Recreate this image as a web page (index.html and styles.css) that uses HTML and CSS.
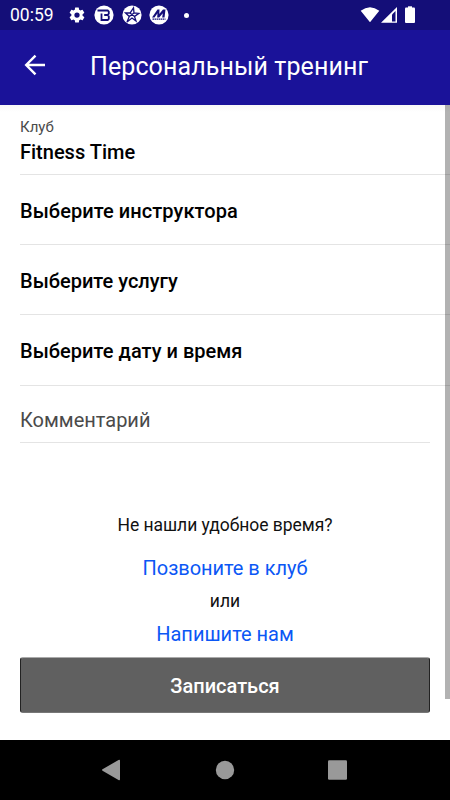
FILE: index.html
```html
<!DOCTYPE html>
<html lang="ru">
<head>
<meta charset="utf-8">
<title>Персональный тренинг</title>
<link rel="stylesheet" href="styles.css">
</head>
<body>
<div class="screen">
  <div class="status">
    <span class="clock">00:59</span>
    <svg class="gear" width="18" height="18" viewBox="0 0 24 24"><path fill="#fff" fill-rule="evenodd" d="M19.4 13a7.500 7.500 0 0 0 0-2l2.100-1.600a.5.5 0 0 0 .1-.7l-2-3.400a.5.5 0 0 0-.6-.2l-2.500 1a7.300 7.300 0 0 0-1.700-1L14.400 2.400a.5.5 0 0 0-.5-.4h-4a.5.5 0 0 0-.5.400L9.100 5.100a7.700 7.700 0 0 0-1.700 1l-2.500-1a.5.5 0 0 0-.6.2l-2 3.400a.5.5 0 0 0 .1.700L4.500 11a8 8 0 0 0 0 2l-2.100 1.600a.5.5 0 0 0-.1.700l2 3.400c.1.200.4.300.6.200l2.500-1c.5.400 1.100.7 1.700 1l.4 2.700c0 .2.200.4.500.4h4c.2 0 .5-.2.500-.4l.4-2.700a7.300 7.300 0 0 0 1.700-1l2.500 1c.2.100.5 0 .6-.2l2-3.400a.5.5 0 0 0-.1-.7zM12 15.500a3.500 3.500 0 1 1 0-7 3.500 3.500 0 0 1 0 7z"/></svg>
    <svg class="app" width="20" height="20" viewBox="0 0 20 20"><circle cx="10" cy="10" r="9.600" fill="#fff"/><path fill="none" stroke="#140e78" stroke-width="1.800" d="M3.500 5.500H13.700L14.800 6.700V8.700L13.700 10 14.800 11.300V13.800L13.700 15H7.500V8.500M10.200 10H13.500"/></svg>
    <svg class="app" width="20" height="20" viewBox="0 0 20 20"><circle cx="10" cy="10" r="9.600" fill="#fff"/><path fill="none" stroke="#140e78" stroke-width="1.300" d="M11.500 2.800L12 8l4.800.4-4.300 3 1.500 4.600-4-3-5 4 2.300-5.500L3.500 8H8zM8 8l4.500 3.400M7.300 11.500L12 8"/></svg>
    <svg class="app" width="20" height="20" viewBox="0 0 20 20"><circle cx="10" cy="10" r="9.600" fill="#fff"/><path fill="#140e78" d="M3 12.500L8.500 4.500h2L10.300 9l3.700-4.500H16.500L15.500 12.500h-2.300l.6-4.300-3.600 4.300H8.200l.3-4.300L5.500 12.500z"/><path stroke="#140e78" stroke-width="1.300" stroke-dasharray="1.500 .5" d="M3.500 14.200h13"/></svg>
    <i class="dot"></i>
    <svg class="signals" width="60" height="20" viewBox="0 0 60 20"><path fill="#fff" d="M.7 5.800Q10 -1.500 19.300 5.800L10 17.300zM21 17.800L37 2v15.800z"/><path fill="#140e78" d="M32 9.500L35.500 6v10.500H32z"/><rect x="45" y="2.500" width="10" height="15.500" rx="1" fill="#fff"/><path fill="#fff" d="M48 1.300h4v2h-4z"/></svg>
  </div>
  <header class="bar">
    <svg class="back" width="22" height="22" viewBox="0 0 22 22"><path fill="none" stroke="#fff" stroke-width="2.400" d="M21 11H2.500M11.500 1.700L2.200 11l9.300 9.300"/></svg>
    <h1>Персональный тренинг</h1>
  </header>
  <main>
    <div class="row club"><small>Клуб</small><b>Fitness Time</b></div>
    <div class="row"><b class="wide">Выберите инструктора</b></div>
    <div class="row"><b>Выберите услугу</b></div>
    <div class="row date"><b>Выберите дату и время</b></div>
    <div class="comment"><span>Комментарий</span></div>
    <div class="help">
      <p class="q"><span>Не нашли удобное время?</span></p>
      <p class="link call"><span>Позвоните в клуб</span></p>
      <p class="or"><span>или</span></p>
      <p class="link mail"><span>Напишите нам</span></p>
    </div>
    <div class="submit"><span>Записаться</span></div>
    <i class="thumb"></i>
  </main>
  <nav>
    <svg width="450" height="60" viewBox="0 0 450 60"><g fill="#999"><path d="M102.500 29.300L118.500 20q1.500-.7 1.500.8v18.500q0 1.400-1.500.7L102.500 30.700q-1-.7 0-1.400z"/><circle cx="225" cy="30" r="9.200"/><rect x="328" y="20.300" width="19" height="19.400" rx="1.200"/></g></svg>
  </nav>
</div>
</body>
</html>
```
FILE: styles.css
```css
* { box-sizing: border-box; margin: 0; padding: 0; }
body { width: 450px; height: 800px; overflow: hidden; font-family: Roboto, sans-serif; background: #fff; color: #000; }
.screen { display: flex; flex-direction: column; height: 800px; }
svg, i { display: block; flex: none; }
.status { height: 30px; background: #140e78; display: flex; align-items: center; padding: 0 30px 0 10px; color: #fff; }
.clock { font-size: 17.500px; line-height: 30px; width: 58px; white-space: nowrap; }
.gear { margin-right: 8px; }
.app { margin-right: 7.500px; }
.dot { width: 5px; height: 5px; border-radius: 50%; background: #fff; margin-left: 7px; }
.signals { margin-left: auto; }
.bar { height: 75px; background: #1a1299; display: flex; align-items: center; padding: 0 0 5px 24px; color: #fff; }
.back { margin-right: 44px; }
h1 { font-size: 25px; font-weight: 400; letter-spacing: .1px; line-height: 30px; white-space: nowrap; padding-top: 4px; }
main { position: relative; height: 635px; display: flex; flex-direction: column; background: linear-gradient(#f7f7f7, #fff 7px); }
.row { height: 70px; margin-left: 20px; border-bottom: 1px solid #e4e4e4; display: flex; align-items: center; padding-top: 3px; }
.club { flex-direction: column; align-items: flex-start; padding-top: 14px; }
.date { height: 71px; padding-bottom: 1px; }
small { font-size: 15px; font-weight: 400; line-height: 17px; color: #4a4a4a; }
b { font-size: 20px; font-weight: 500; line-height: 24px; white-space: nowrap; }
.wide { letter-spacing: .07px; }
.date b { letter-spacing: .03px; }
.club b { margin-top: 4px; }
.comment { height: 57px; margin: 0 20px; border-bottom: 1px solid #e4e4e4; font-size: 20px; font-weight: 400; line-height: 24px; padding-top: 22px; color: #4a4a4a; }
.help { text-align: center; padding-top: 70px; height: 214px; }
.q, .or { font-size: 17.500px; line-height: 24px; color: #111; }
.q { letter-spacing: -.04px; }
.link { font-size: 20px; line-height: 24px; color: #0b57f5; }
.call { margin-top: 19px; letter-spacing: -.04px; }
.or { margin-top: 9px; }
.mail { margin-top: 9px; }
.submit { height: 56px; margin: 0 20px; border: 1px solid #222; border-top-color: #aaa; border-bottom-color: #777; border-radius: 3px; background: #606060; color: #fff; display: flex; align-items: center; justify-content: center; font-size: 20px; font-weight: 500; line-height: 24px; padding-top: 1px; }
.thumb { position: absolute; right: 0; top: 0; width: 5px; height: 594px; background: rgba(0, 0, 0, .3); }
nav { height: 60px; background: #000; }
```
